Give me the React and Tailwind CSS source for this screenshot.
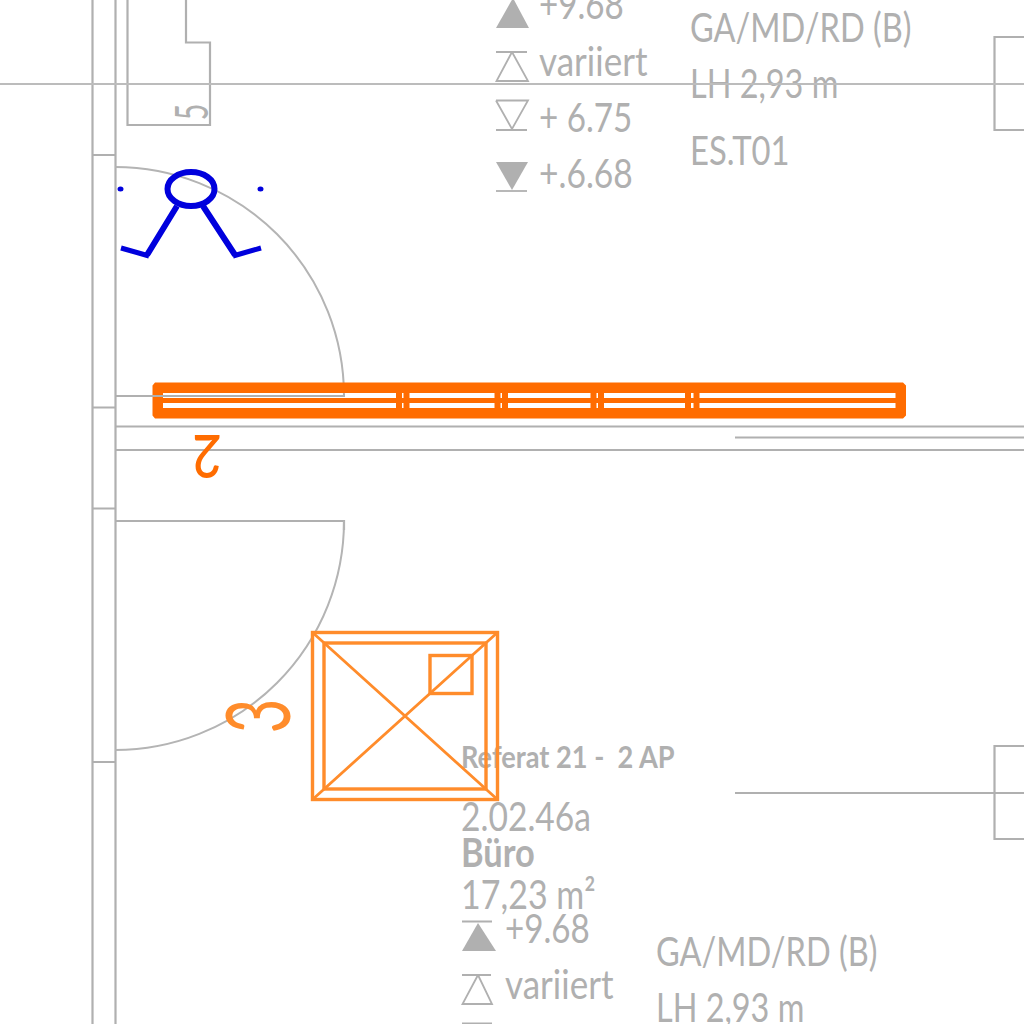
const text = "block whitespace-pre leading-none text-[#b0b0b0] text-[40px] h-[40px] origin-left font-['Lato','Noto_Sans',sans-serif]";
const numeral = "text-center leading-none font-['Lato',sans-serif]";

function Lines() {
  return (
    <svg className="absolute inset-0" width="1024" height="1024" viewBox="0 0 1024 1024" fill="none">
      <g stroke="#b0b0b0" strokeWidth="2.200">
        <path d="M92.500 0V1024M115.500 0V1024" />
        <path d="M127.500 0V125H210V42.500H186V0" />
        <path d="M92 155H115M92 407.500H115M92 508.500H115M92 762H115" />
        <path d="M115 426.500H1024M115 450H1024M735 437.500H1024M735 793H1024" />
        <path d="M1024 37H994.500V130H1024M1024 746H994.500V839H1024" />
        <path d="M115 521H344V530" />
      </g>
      <path d="M0 84H1024" stroke="#bcbcbc" strokeWidth="2" />
      <g stroke="#b4b4b4" strokeWidth="2">
        <path d="M115 167A229 229 0 0 1 344 396" />
        <path d="M344 521A229 229 0 0 1 115 750" />
      </g>
      <g stroke="#b0b0b0" strokeWidth="1.800">
        <path d="M496 52H527M512 52L496.500 81H528L512 52" />
        <path d="M496 100.500H528L512 129L496 100.500M496 130H527" />
        <path d="M496 191H527" />
        <path d="M462 921.500H492M462 975H491M478 975L462.500 1004H492L478 975M462 1023.500H492" />
      </g>
      <g fill="#b0b0b0">
        <path d="M513 -2L529 28H496Z" />
        <path d="M496 162H528L512 190Z" />
        <path d="M478 923L496 951H462Z" />
      </g>

      <path
        fill="#ff6c00"
        fillRule="evenodd"
        d="M155 382.500H903L906 385.500V415.500L903 418.500H155L152.500 415.500V385.500ZM163 393V408H895.500V393Z"
      />
      <g stroke="#ff6c00" fill="none">
        <path d="M158 400.500H900" strokeWidth="5" />
        <path d="M399 393V408M406.500 393V408M497.500 393V408M505 393V408M593.500 393V408M601 393V408M688 393V408M696.500 393V408" strokeWidth="6" />
      </g>
      <path d="M115 396H344L344 394" stroke="#b0b0b0" strokeWidth="2" />

      <g stroke="#ff8c2b" strokeWidth="3.400">
        <rect x="312.500" y="632.500" width="185" height="167" />
        <rect x="324" y="643" width="162" height="146" />
        <rect x="430" y="655.500" width="42" height="38" />
        <path d="M312 632L498 800M498 632L312 800" strokeWidth="2.800" />
      </g>

      <g stroke="#0000dd" strokeWidth="6">
        <ellipse cx="191" cy="189" rx="23.500" ry="17" />
        <path d="M177 206L147 255M203 206L235 255" />
        <path d="M121 248L149 256M261 248L233 256" strokeWidth="5" />
      </g>
      <ellipse cx="120.500" cy="189" rx="3" ry="2.500" fill="#0000dd" />
      <ellipse cx="260.500" cy="189" rx="3" ry="2.500" fill="#0000dd" />
    </svg>
  );
}

export default function App() {
  return (
    <div className="relative w-[1024px] h-[1024px] overflow-hidden bg-white">
      <div className="absolute left-[539px] top-[-16px] flex flex-col">
        <span className={`${text} scale-x-[0.83]`}>+9.68</span>
        <span className={`${text} mt-[17px] scale-x-[0.876]`}>variiert</span>
        <span className={`${text} mt-[16px] scale-x-[0.83]`}>+ 6.75</span>
        <span className={`${text} mt-[16px] scale-x-[0.84]`}>+.6.68</span>
      </div>
      <div className="absolute left-[690px] top-[7px] flex flex-col">
        <span className={`${text} scale-x-[0.813]`}>GA/MD/RD (B)</span>
        <span className={`${text} mt-[16px] scale-x-[0.81]`}>LH 2,93 m</span>
        <span className={`${text} mt-[27px] scale-x-[0.82]`}>ES.T01</span>
      </div>

      <div className="absolute left-[461px] top-[741px] flex flex-col">
        <span className={`${text} !text-[30px] !h-[30px] font-bold scale-x-[0.906]`}>Referat 21 -  2 AP</span>
        <span className={`${text} mt-[25px] scale-x-[0.84]`}>2.02.46a</span>
        <span className={`${text} mt-[-4px] font-bold scale-x-[0.86]`}>Büro</span>
        <span className={`${text} mt-[2px] scale-x-[0.85]`}>17,23 m²</span>
      </div>
      <div className="absolute left-[505px] top-[908px] flex flex-col">
        <span className={`${text} scale-x-[0.83]`}>+9.68</span>
        <span className={`${text} mt-[16px] scale-x-[0.876]`}>variiert</span>
      </div>
      <div className="absolute left-[656px] top-[931px] flex flex-col">
        <span className={`${text} scale-x-[0.813]`}>GA/MD/RD (B)</span>
        <span className={`${text} mt-[16px] scale-x-[0.81]`}>LH 2,93 m</span>
      </div>

      <Lines />

      <span className={`${numeral} absolute left-[161px] top-[89px] w-[60px] text-[46px] text-[#b0b0b0] -rotate-90 scale-x-[0.62]`}>5</span>
      <span className={`${numeral} absolute left-[177px] top-[428px] w-[60px] text-[60px] font-medium text-[#ff6c00] rotate-180 scale-x-[0.85]`}>2</span>
      <span className={`${numeral} absolute left-[215px] top-[671px] w-[80px] text-[90px] text-[#ff8c2b] -rotate-90 scale-x-[0.66]`}>3</span>
    </div>
  );
}
